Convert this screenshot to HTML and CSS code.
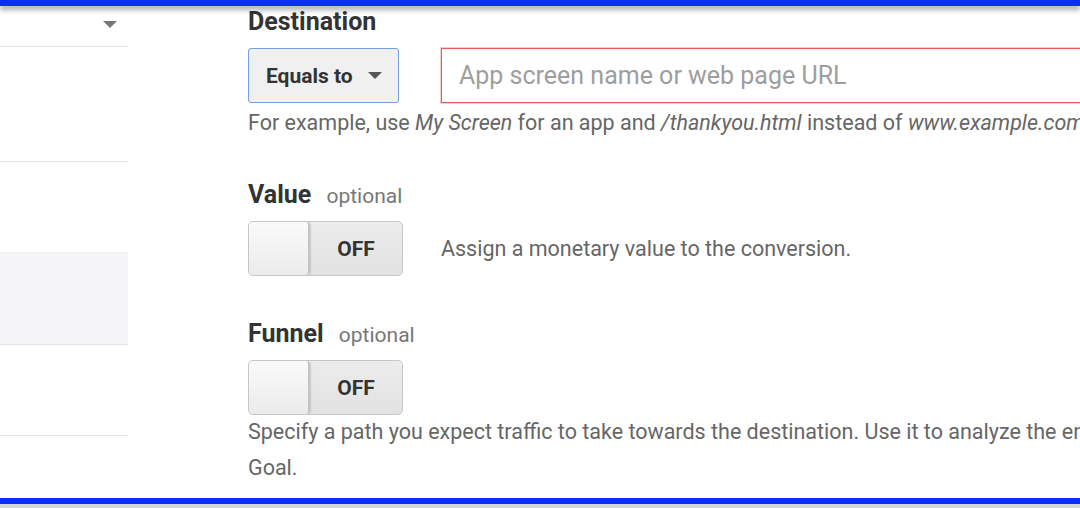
FILE: index.html
```html
<!DOCTYPE html>
<html>
<head>
<meta charset="utf-8">
<link rel="stylesheet" href="styles.css">
</head>
<body>
<div class="frame">
  <div class="bar-top"></div>
  <div class="content">
    <aside class="side">
      <div class="side-row side-select"><span class="caret"></span></div>
      <div class="side-row side-tall"></div>
      <div class="side-row side-plain"></div>
      <div class="side-row side-active"></div>
      <div class="side-row side-last"></div>
    </aside>
    <main class="form">
      <h2 class="label label-dest">Destination</h2>
      <div class="dest-row">
        <button class="match-select">Equals to <span class="caret caret-dark"></span></button>
        <input class="url-input" type="text" placeholder="App screen name or web page URL">
      </div>
      <p class="help help-dest">For example, use <i>My Screen</i> for an app and <i>/thankyou.html</i> instead of <i>www.example.com/thankyou.html</i> for a web page.</p>

      <h2 class="label label-value">Value <span class="optional">optional</span></h2>
      <div class="toggle-row">
        <div class="toggle"><span class="knob"></span><span class="state">OFF</span></div>
        <span class="toggle-desc">Assign a monetary value to the conversion.</span>
      </div>

      <h2 class="label label-funnel">Funnel <span class="optional">optional</span></h2>
      <div class="toggle-row">
        <div class="toggle"><span class="knob"></span><span class="state">OFF</span></div>
      </div>
      <p class="help help-funnel">Specify a path you expect traffic to take towards the destination. Use it to analyze the entrance and exit points that impact your Goal.</p>
    </main>
  </div>
  <div class="bar-bottom"></div>
  <div class="under"></div>
</div>
</body>
</html>
```

FILE: styles.css
```css
html, body {
  margin: 0;
  padding: 0;
  background: #ffffff;
}

.frame {
  width: 1080px;
  height: 508px;
  overflow: hidden;
  display: flex;
  flex-direction: column;
  font-family: Roboto, "Liberation Sans", sans-serif;
  color: #333;
}

.bar-top {
  height: 6px;
  background: #0a2ff2;
  flex: none;
  position: relative;
  z-index: 2;
  box-shadow: 0 4px 5px rgba(0, 0, 0, 0.32);
}

.content {
  flex: 1;
  display: grid;
  grid-template-columns: 128px 1fr;
  column-gap: 120px;
  overflow: hidden;
}

.bar-bottom {
  height: 6px;
  background: #0a2ff2;
  flex: none;
}

.under {
  height: 4px;
  background: #d6d6d6;
  flex: none;
}

/* left panel */
.side {
  display: flex;
  flex-direction: column;
}

.side-row {
  border-bottom: 1px solid #e4e4e4;
}

.side-select {
  display: flex;
  justify-content: flex-end;
  align-items: center;
  padding-right: 11px;
  padding-bottom: 4px;
  box-sizing: border-box;
  height: 41px;
}

.caret {
  width: 0;
  height: 0;
  border-left: 7px solid transparent;
  border-right: 7px solid transparent;
  border-top: 7px solid #777;
}

.side-tall {
  height: 114px;
}

.side-plain {
  height: 90px;
  border-bottom: none;
}

.side-active {
  height: 91px;
  background: #f5f5f7;
  border-top: 1px solid #f0f0f2;
}

.side-last {
  height: 90px;
}

/* form */
.form {
  min-width: 0;
  white-space: nowrap;
  padding-top: 2px;
}

.label {
  margin: 0;
  font-size: 25px;
  font-weight: 700;
  color: #333;
  line-height: 28px;
}

.optional {
  font-weight: 400;
  font-size: 21px;
  color: #777;
  margin-left: 9px;
}

.dest-row {
  display: flex;
  gap: 42px;
  margin-top: 12px;
}

.match-select {
  width: 151px;
  height: 55px;
  box-sizing: border-box;
  border: 1px solid #72a0e6;
  border-radius: 3px;
  background: #f0f0f0;
  font-family: Roboto, "Liberation Sans", sans-serif;
  font-size: 21px;
  font-weight: 700;
  color: #333;
  display: flex;
  align-items: center;
  gap: 15px;
  padding: 0 0 0 17px;
  flex: none;
}

.caret-dark {
  border-top-color: #555;
}

.url-input {
  width: 700px;
  height: 55px;
  box-sizing: border-box;
  border: 1px solid #e2604f;
  box-shadow: 0 0 0 1px rgba(226, 96, 79, 0.3);
  border-radius: 0;
  padding: 0 17px;
  font-family: Roboto, "Liberation Sans", sans-serif;
  font-size: 25px;
  color: #333;
  flex: none;
}

.url-input::placeholder {
  color: #9e9e9e;
}

.help {
  margin: 0;
  font-size: 21.5px;
  color: #666;
  line-height: 36px;
}

.help-dest {
  margin-top: 2px;
}

.label-value {
  margin-top: 40px;
}

.toggle-row {
  display: flex;
  align-items: center;
  gap: 38px;
  margin-top: 11px;
}

.toggle {
  width: 155px;
  height: 55px;
  box-sizing: border-box;
  border: 1px solid #c6c6c6;
  border-radius: 5px;
  background: linear-gradient(#ececec, #e2e2e2);
  display: flex;
  flex: none;
  overflow: hidden;
}

.knob {
  width: 61px;
  height: 100%;
  box-sizing: border-box;
  background: linear-gradient(#fafafa, #ebebeb);
  border-right: 2px solid #c3c3c3;
  border-radius: 4px;
  box-shadow: 1px 0 2px rgba(0, 0, 0, 0.12);
}

.state {
  flex: 1;
  display: flex;
  align-items: center;
  justify-content: center;
  font-size: 21px;
  font-weight: 700;
  color: #333;
}

.toggle-desc {
  font-size: 21.5px;
  color: #666;
}

.label-funnel {
  margin-top: 44px;
}

.help-funnel {
  white-space: normal;
  width: 1230px;
  margin-top: -1px;
}
```
